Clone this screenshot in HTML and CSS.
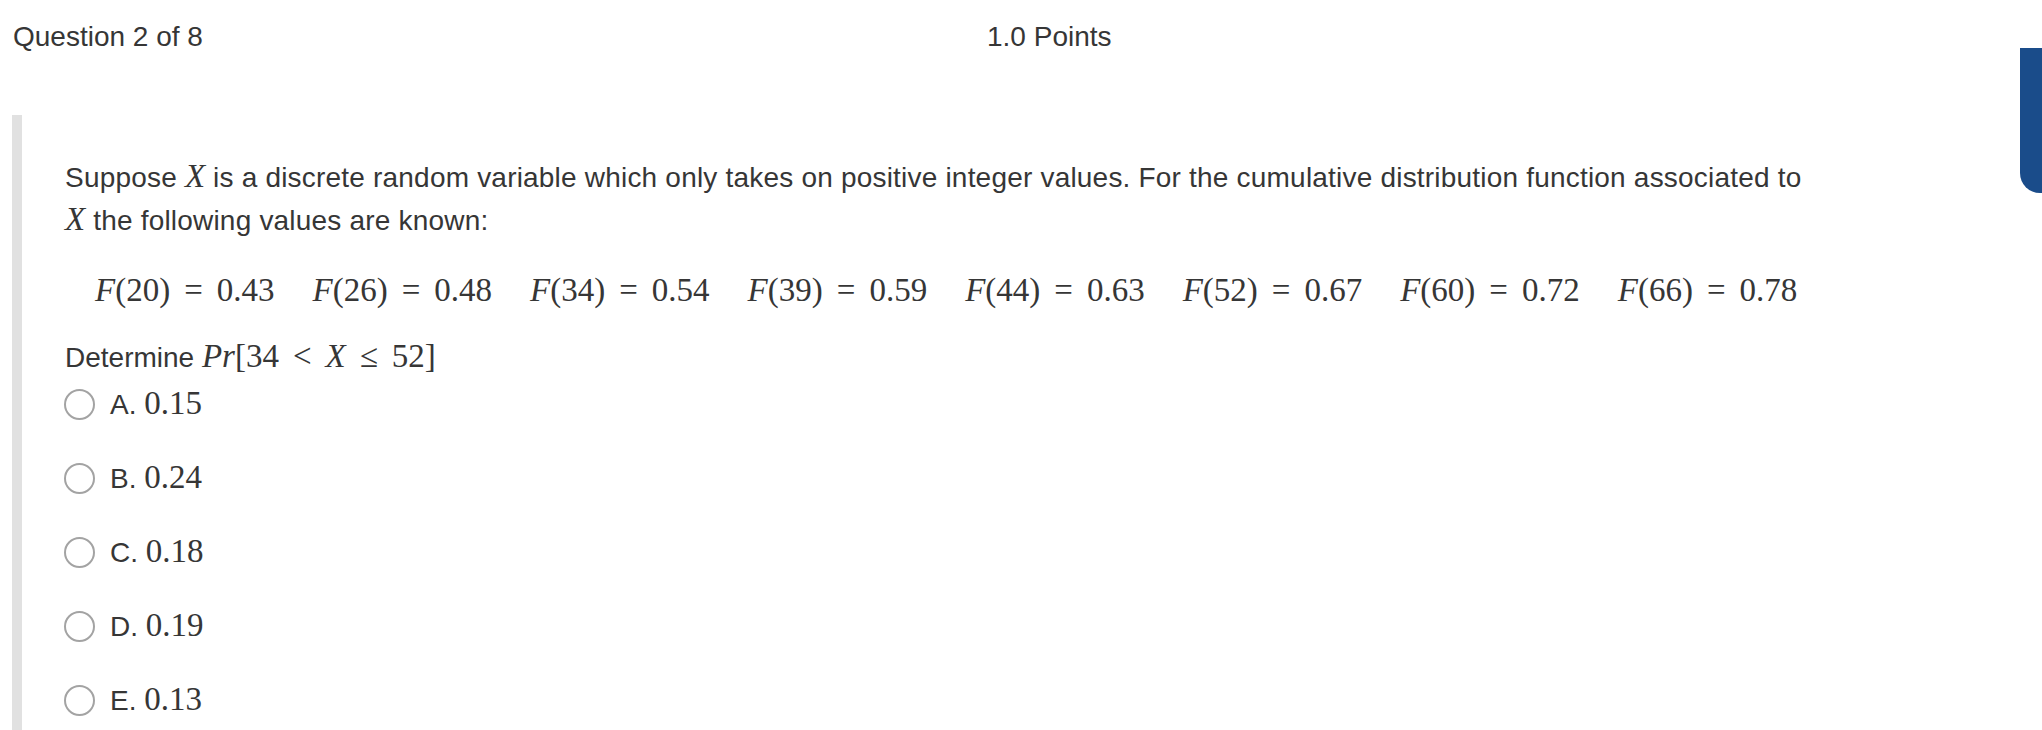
FILE: index.html
```html
<!DOCTYPE html>
<html lang="en">
<head>
<meta charset="utf-8">
<title>Question 2 of 8</title>
<link rel="stylesheet" href="styles.css">
</head>
<body>
<header class="qhead">
  <div class="qnum">Question 2 of 8</div>
  <div class="qpts">1.0 Points</div>
</header>
<div class="side-tab"></div>
<main class="question">
  <p class="stem">Suppose <span class="mi">X</span> is a discrete random variable which only takes on positive integer values. For the cumulative distribution function associated to <span class="mi">X</span> the following values are known:</p>
  <div class="formula">
    <span class="fx"><span class="mi">F</span>(20)<span class="eq">=</span>0.43</span>
    <span class="fx"><span class="mi">F</span>(26)<span class="eq">=</span>0.48</span>
    <span class="fx"><span class="mi">F</span>(34)<span class="eq">=</span>0.54</span>
    <span class="fx"><span class="mi">F</span>(39)<span class="eq">=</span>0.59</span>
    <span class="fx"><span class="mi">F</span>(44)<span class="eq">=</span>0.63</span>
    <span class="fx"><span class="mi">F</span>(52)<span class="eq">=</span>0.67</span>
    <span class="fx"><span class="mi">F</span>(60)<span class="eq">=</span>0.72</span>
    <span class="fx"><span class="mi">F</span>(66)<span class="eq">=</span>0.78</span>
  </div>
  <p class="ask">Determine <span class="math"><span class="mi">Pr</span>[34<span class="rel">&lt;</span><span class="mi">X</span><span class="rel">≤</span>52]</span></p>
  <ul class="options">
    <li class="opt"><span class="radio"></span><span class="lbl">A. <span class="math">0.15</span></span></li>
    <li class="opt"><span class="radio"></span><span class="lbl">B. <span class="math">0.24</span></span></li>
    <li class="opt"><span class="radio"></span><span class="lbl">C. <span class="math">0.18</span></span></li>
    <li class="opt"><span class="radio"></span><span class="lbl">D. <span class="math">0.19</span></span></li>
    <li class="opt"><span class="radio"></span><span class="lbl">E. <span class="math">0.13</span></span></li>
  </ul>
</main>
</body>
</html>
```
FILE: styles.css
```css
html, body {
  margin: 0;
  padding: 0;
  background: #ffffff;
}
body {
  font-family: "Liberation Sans", Arial, Helvetica, sans-serif;
  font-size: 28px;
  color: #363636;
  width: 2042px;
  height: 730px;
  overflow: hidden;
  position: relative;
}
.qhead {
  display: grid;
  grid-template-columns: 974px 1fr;
  padding: 21px 0 0 13px;
  line-height: 32px;
  height: 115px;
  box-sizing: border-box;
}
.side-tab {
  position: absolute;
  right: 0;
  top: 48px;
  width: 22px;
  height: 145px;
  background: #1a4c8a;
  border-bottom-left-radius: 20px;
}
.question {
  margin-left: 12px;
  border-left: 10px solid #e1e1e1;
  padding: 39px 0 0 43px;
  height: 615px;
  box-sizing: border-box;
  width: 1800px;
}
.stem {
  margin: 2px 0 0;
  line-height: 43px;
  width: 1748px;
  letter-spacing: 0.2px;
}
.mi {
  font-family: "Liberation Serif", "Times New Roman", serif;
  font-style: italic;
  font-size: 33px;
  line-height: 1;
  letter-spacing: 0;
}
.math {
  font-family: "Liberation Serif", "Times New Roman", serif;
  font-size: 33px;
  line-height: 1;
}
.formula {
  display: flex;
  gap: 38px;
  margin: 27px 0 0 30px;
  font-family: "Liberation Serif", "Times New Roman", serif;
  font-size: 33px;
  line-height: 43px;
}
.fx {
  white-space: nowrap;
}
.eq {
  margin: 0 14px;
}
.ask {
  margin: 24px 0 0;
  line-height: 43px;
}
.rel {
  margin: 0 14px;
}
.options {
  list-style: none;
  margin: 5px 0 0;
  padding: 0;
  display: flex;
  flex-direction: column;
  gap: 34px;
}
.opt {
  display: flex;
  align-items: center;
  height: 40px;
}
.radio {
  width: 31px;
  height: 31px;
  box-sizing: border-box;
  border: 2px solid #a3a3a3;
  border-radius: 50%;
  margin-left: -1px;
  flex: none;
}
.lbl {
  margin-left: 15px;
  white-space: nowrap;
}
```
